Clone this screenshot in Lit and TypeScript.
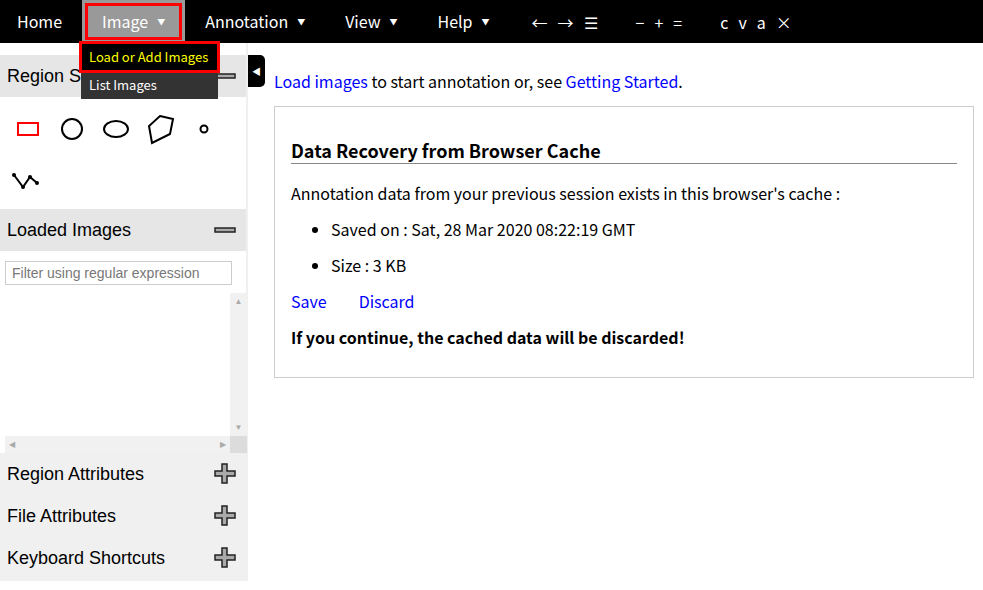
import { LitElement, html, css, svg } from 'lit';
import { customElement } from 'lit/decorators.js';

const minus = svg`<path d="M1 3h20v4H1z" fill="#aaa" stroke="#222" stroke-width="1.5"/>`;
const plus = svg`<path d="M8 1h5v7h8v5h-8v7H8v-7H1V8h7z" fill="#aaa" stroke="#222" stroke-width="1.5"/>`;

@customElement('app-root')
export class AppRoot extends LitElement {
    static styles = css`
    :host {
      display: block;
      width: 983px;
      height: 590px;
      position: relative;
      overflow: hidden;
      background: #fff;
      color: #000;
      font-family: "Noto Sans CJK KR", "Noto Sans", sans-serif;
      font-size: 16px;
    }

    .navbar {
      display: flex;
      height: 43px;
      background: #000;
      color: #fff;
      align-items: center;
    }
    .menu {
      display: flex;
      height: 100%;
    }
    .menu-item {
      display: flex;
      align-items: center;
      padding: 0 20px;
      gap: 9px;
      line-height: 43px;
    }
    .menu-item.first { padding: 0 20px 0 17px; }
    .caret { font-size: 8px; }
    .menu-item.open {
      background: #999;
      outline: 3px solid #f00;
      outline-offset: -6px;
    }
    .tools {
      display: flex;
      align-items: center;
      margin-left: 22px;
      gap: 38px;
    }
    .tool-group { display: flex; gap: 10px; }

    .dropdown {
      position: absolute;
      left: 81px;
      top: 43px;
      width: 137px;
      background: #333;
      color: #fff;
      font-size: 13px;
      z-index: 2;
    }
    .dropdown div { height: 28px; line-height: 28px; padding-left: 8px; }
    .dropdown .active {
      color: #ff0;
      background: #000;
      outline: 3px solid #f00;
      outline-offset: -1px;
    }

    .main { display: flex; }
    .sidebar {
      width: 248px;
      font-family: "Liberation Sans", Arial, sans-serif;
      font-size: 18px;
      padding-top: 12px;
      box-sizing: border-box;
      border-right: 2px solid #f0f0f0;
    }
    .head {
      display: flex;
      justify-content: space-between;
      align-items: center;
      height: 42px;
      padding: 0 10px 0 7px;
      background: #e6e6e6;
    }
    .shapes {
      display: flex;
      flex-wrap: wrap;
      height: 112px;
      padding: 10px 0 0 6px;
      box-sizing: border-box;
    }
    .shapes svg { width: 44px; height: 44px; }
    .filter { padding: 10px 0 0 5px; height: 42px; box-sizing: border-box; }
    .filter input {
      width: 227px;
      height: 24px;
      box-sizing: border-box;
      border: 1px solid #ccc;
      padding: 0 6px;
      font: 14px "Liberation Sans", Arial, sans-serif;
    }
    .filter input::placeholder { color: #777; opacity: 1; }
    .list {
      display: grid;
      grid-template-columns: 225px 17px;
      grid-template-rows: 143px 17px;
      margin-left: 5px;
      color: #aaa;
      font-size: 8px;
    }
    .vbar, .hbar, .corner { background: #f1f1f1; display: flex; justify-content: space-between; align-items: center; }
    .vbar { flex-direction: column; padding: 4px 0; box-sizing: border-box; }
    .hbar { padding: 0 4px; box-sizing: border-box; }
    .corner { background: #dcdcdc; }
    .closed {
      background: #f0f0f0;
      padding-bottom: 2px;
    }
    .closed .head { background: none; }

    .toggle {
      position: absolute;
      left: 248px;
      top: 55px;
      width: 17px;
      height: 32px;
      background: #000;
      color: #fff;
      border-radius: 0 5px 5px 0;
      font-size: 9px;
      display: flex;
      align-items: center;
      justify-content: center;
    }

    .content { padding: 26px 0 0 26px; width: 700px; }
    .content p { margin: 0; }
    a { color: #00f; text-decoration: none; }
    .panel {
      box-sizing: border-box;
      width: 700px;
      height: 272px;
      margin-top: 13px;
      border: 1px solid #ccc;
      padding: 30px 16px 0;
      display: flex;
      flex-direction: column;
      gap: 12px;
      line-height: 24px;
    }
    h3 {
      margin: 0 0 5px;
      font-size: 18px;
      font-weight: 700;
      line-height: 26px;
      border-bottom: 1px solid #888;
    }
    ul { margin: 0; padding-left: 40px; display: flex; flex-direction: column; gap: 12px; }
    .actions { display: flex; gap: 32px; }
    .warn { font-weight: 700; }
  `;

    render() {
        return html`
      <div class="navbar">
        <div class="menu">
          <div class="menu-item first">Home</div>
          <div class="menu-item open">Image <span class="caret">▼</span></div>
          <div class="menu-item">Annotation <span class="caret">▼</span></div>
          <div class="menu-item">View <span class="caret">▼</span></div>
          <div class="menu-item">Help <span class="caret">▼</span></div>
        </div>
        <div class="tools">
          <div class="tool-group"><span>←</span><span>→</span><span>☰</span></div>
          <div class="tool-group"><span>−</span><span>+</span><span>=</span></div>
          <div class="tool-group"><span>c</span><span>v</span><span>a</span><span>×</span></div>
        </div>
      </div>
      <div class="dropdown">
        <div class="active">Load or Add Images</div>
        <div>List Images</div>
      </div>
      <div class="main">
        <div class="sidebar">
          <div class="head">Region Shape<svg width="22" height="10">${minus}</svg></div>
          <div class="shapes">
            <svg viewBox="0 0 44 44"><rect x="12" y="16" width="20" height="12" fill="none" stroke="#f00" stroke-width="2"/></svg>
            <svg viewBox="0 0 44 44"><circle cx="22" cy="22" r="10" fill="none" stroke="#000" stroke-width="2"/></svg>
            <svg viewBox="0 0 44 44"><ellipse cx="22" cy="22" rx="12" ry="8" fill="none" stroke="#000" stroke-width="2"/></svg>
            <svg viewBox="0 0 44 44"><path d="M27 9l13 3-3 15-18 9-3-17z" transform="translate(-5 0)" fill="none" stroke="#000" stroke-width="2"/></svg>
            <svg viewBox="0 0 44 44"><circle cx="22" cy="22" r="3.5" fill="none" stroke="#000" stroke-width="2"/></svg>
            <svg viewBox="0 0 44 44"><path d="M8 17l9 12 7-10 7 6" fill="none" stroke="#000" stroke-width="2"/><circle cx="8" cy="17" r="2"/><circle cx="17" cy="29" r="2"/><circle cx="24" cy="19" r="2"/><circle cx="31" cy="25" r="2"/></svg>
          </div>
          <div class="head">Loaded Images<svg width="22" height="10">${minus}</svg></div>
          <div class="filter"><input placeholder="Filter using regular expression" /></div>
          <div class="list">
            <div></div>
            <div class="vbar"><span>▲</span><span>▼</span></div>
            <div class="hbar"><span>◀</span><span>▶</span></div>
            <div class="corner"></div>
          </div>
          <div class="closed">
            <div class="head">Region Attributes<svg width="22" height="22">${plus}</svg></div>
            <div class="head">File Attributes<svg width="22" height="22">${plus}</svg></div>
            <div class="head">Keyboard Shortcuts<svg width="22" height="22">${plus}</svg></div>
          </div>
        </div>
        <div class="content">
          <p><a>Load images</a> to start annotation or, see <a>Getting Started</a>.</p>
          <div class="panel">
            <h3>Data Recovery from Browser Cache</h3>
            <p>Annotation data from your previous session exists in this browser's cache :</p>
            <ul>
              <li>Saved on : Sat, 28 Mar 2020 08:22:19 GMT</li>
              <li>Size : 3 KB</li>
            </ul>
            <div class="actions"><a>Save</a><a>Discard</a></div>
            <p class="warn">If you continue, the cached data will be discarded!</p>
          </div>
        </div>
      </div>
      <div class="toggle">◀</div>
    `;
    }
}
